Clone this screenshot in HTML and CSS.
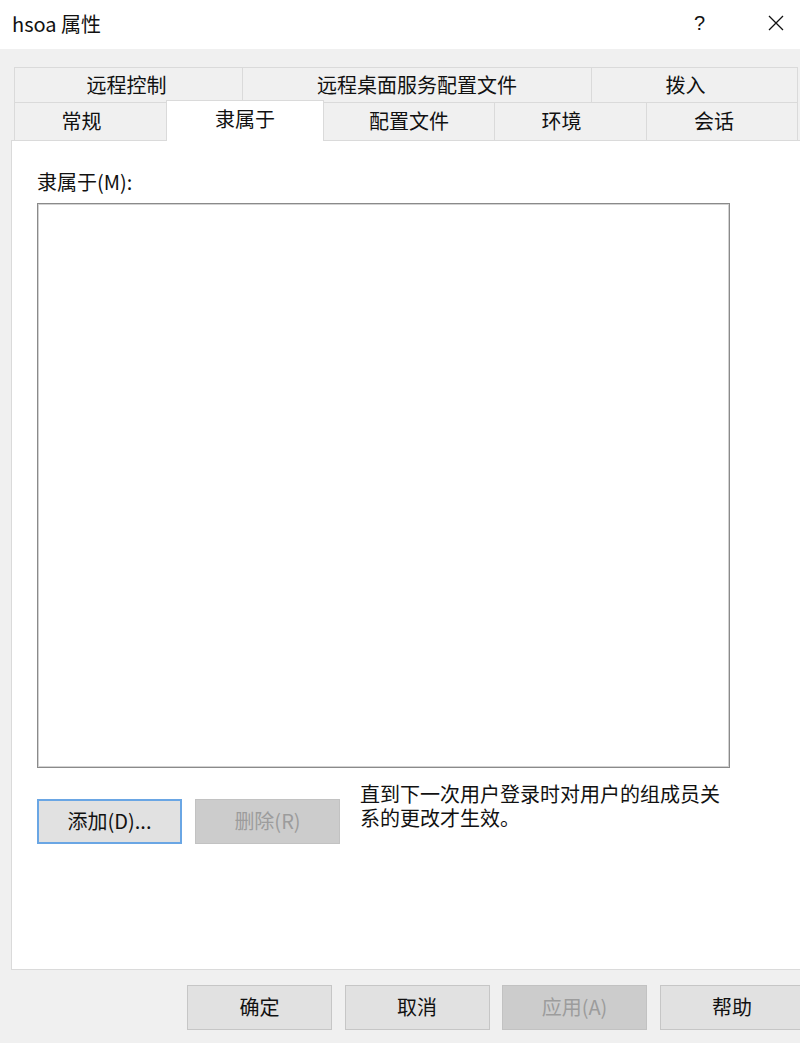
FILE: index.html
```html
<!DOCTYPE html>
<html lang="zh-CN">
<head>
<meta charset="utf-8">
<title>hsoa 属性</title>
<link rel="stylesheet" href="styles.css">
</head>
<body>
<div class="window">
  <div class="titlebar">
    <div class="title">hsoa 属性</div>
    <div class="help">?</div>
    <div class="close">
      <svg width="16" height="16" viewBox="0 0 16 16"><path d="M1 1 L15 15 M15 1 L1 15" stroke="#111" stroke-width="1.3" fill="none"/></svg>
    </div>
  </div>
  <div class="tabs">
    <div class="row row1">
      <div class="tab t-remote">远程控制</div>
      <div class="tab t-rds">远程桌面服务配置文件</div>
      <div class="tab t-dial">拨入</div>
    </div>
    <div class="row row2">
      <div class="tab t-general">常规</div>
      <div class="tab t-member active">隶属于</div>
      <div class="tab t-profile">配置文件</div>
      <div class="tab t-env">环境</div>
      <div class="tab t-session">会话</div>
    </div>
  </div>
  <div class="panel">
    <div class="label">隶属于(M):</div>
    <div class="listbox"></div>
    <div class="actions">
      <button class="btn focused">添加(D)...</button>
      <button class="btn disabled">删除(R)</button>
      <div class="note">直到下一次用户登录时对用户的组成员关系的更改才生效。</div>
    </div>
  </div>
  <div class="footer">
    <button class="btn">确定</button>
    <button class="btn">取消</button>
    <button class="btn disabled">应用(A)</button>
    <button class="btn">帮助</button>
  </div>
</div>
</body>
</html>
```
FILE: styles.css
```css
* { box-sizing: border-box; }
html, body {
  margin: 0;
  padding: 0;
}
body {
  width: 800px;
  height: 1043px;
  overflow: hidden;
  background: #f0f0f0;
  font-family: "Noto Sans CJK SC", "Noto Sans", sans-serif;
  color: #111;
}
.window {
  width: 800px;
  height: 1043px;
}
.titlebar {
  height: 49px;
  background: #fff;
  display: flex;
  align-items: center;
  padding-left: 12px;
}
.title {
  flex: 1;
  font-size: 20px;
  line-height: 26px;
  margin-top: -2px;
}
.help {
  font-family: "Liberation Sans", sans-serif;
  font-size: 20px;
  line-height: 24px;
  margin-right: 63px;
  margin-top: -4px;
}
.close {
  width: 16px;
  height: 16px;
  margin-right: 16px;
  margin-top: -4px;
  display: flex;
}
.tabs {
  margin: 18px 0 0 14px;
  width: 784px;
}
.row {
  display: flex;
  align-items: flex-start;
}
.row1 { height: 35px; }
.row2 { height: 38px; }
.tab {
  display: flex;
  align-items: center;
  justify-content: center;
  font-size: 20px;
  background: #f0f0f0;
  border: 1px solid #dadada;
  border-bottom: none;
  margin-right: -1px;
  padding-bottom: 2px;
}
.row1 .tab { height: 36px; }
.row2 .tab { height: 38px; }
.t-remote { width: 229px; padding-right: 4px; }
.t-rds { width: 350px; }
.t-dial { width: 207px; padding-right: 18px; }
.t-general { width: 153px; padding-right: 18px; }
.t-member { width: 158px; }
.t-profile { width: 172px; }
.t-env { width: 153px; padding-right: 18px; }
.t-session { width: 152px; padding-right: 16px; }
.row2 .tab.active {
  background: #fff;
  height: 41px;
  margin-top: -2px;
  position: relative;
  z-index: 1;
  padding-bottom: 6px;
}
.panel {
  margin-left: 11px;
  height: 830px;
  background: #fff;
  border: 1px solid #dadada;
  border-right: none;
  padding: 28px 0 0 25px;
}
.label {
  font-size: 20px;
  line-height: 26px;
}
.listbox {
  margin-top: 8px;
  width: 693px;
  height: 565px;
  border: 1px solid #8a8a8a;
  box-shadow: inset 0 0 0 1px #d2d2d2;
  background: #fff;
}
.actions {
  display: flex;
  align-items: flex-start;
  margin-top: 14px;
}
.btn {
  width: 145px;
  height: 45px;
  font-family: inherit;
  font-size: 20px;
  color: #111;
  background: #e1e1e1;
  border: 1px solid #c6c6c6;
  padding: 0 0 2px;
  margin: 0;
}
.actions .btn {
  margin-top: 17px;
  margin-right: 13px;
}
.btn.focused {
  border: 2px solid #6aa6e4;
}
.btn.disabled {
  background: #cccccc;
  border-color: #c2c2c2;
  color: #9c9c9c;
}
.actions .btn.disabled {
  margin-right: 20px;
}
.note {
  width: 368px;
  font-size: 20px;
  line-height: 24px;
}
.footer {
  display: flex;
  gap: 12.5px;
  margin-top: 15px;
  padding-left: 187px;
}
.footer .btn { flex: 0 0 145px; }
```
